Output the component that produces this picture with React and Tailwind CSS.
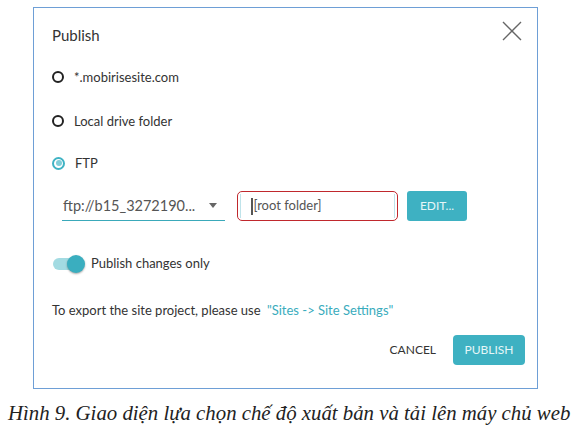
import React from "react";

function Radio({ checked }) {
  if (checked) {
    return (
      <span className="flex h-[13px] w-[13px] items-center justify-center rounded-full border-2 border-[#3fb3c4]">
        <span className="h-[6px] w-[6px] rounded-full bg-[#7fcdd8]" />
      </span>
    );
  }
  return <span className="h-[12px] w-[12px] rounded-full border-2 border-[#222]" />;
}

export default function App() {
  return (
    <div className="h-[433px] w-[575px] bg-white" style={{ fontFamily: "Lato, 'Open Sans', sans-serif" }}>
      <div className="ml-[33px] pt-[7px]">
        <div className="relative flex h-[382px] w-[505px] flex-col border-[1.5px] border-[#6e9fd6] bg-white pl-[18px] text-[#333]">
          <button className="absolute right-[15px] top-[13px] text-[#666]">
            <svg width="20" height="20" viewBox="0 0 20 20" fill="none" stroke="currentColor" strokeWidth="1.4">
              <path d="M1 1 L19 19 M19 1 L1 19" />
            </svg>
          </button>
          <div className="mt-[17px] text-[15px] leading-[20px] text-[#333]">Publish</div>
          <div className="mt-[23px] flex items-center gap-[10px] text-[13px] leading-[18px]">
            <Radio />
            <span>*.mobirisesite.com</span>
          </div>
          <div className="mt-[26px] flex items-center gap-[10px] text-[13px] leading-[18px]">
            <Radio />
            <span>Local drive folder</span>
          </div>
          <div className="mt-[24px] flex items-center gap-[10px] text-[13px] leading-[18px]">
            <Radio checked />
            <span>FTP</span>
          </div>
          <div className="mt-[19px] flex items-center">
            <div className="ml-[10px] flex h-[30px] w-[163px] items-center justify-between border-b-[1.5px] border-[#3aa9ba] pl-[1px] pr-[8px] text-[14.5px] text-[#555]">
              <span>ftp://b15_3272190...</span>
              <svg width="8" height="5" viewBox="0 0 10 6"><path d="M0 0 L10 0 L5 6 Z" fill="#666" /></svg>
            </div>
            <div className="ml-[12px] flex h-[30px] w-[161px] items-center rounded-[5px] border-[1.5px] border-[#c0282d] px-[2px]">
              <div className="flex h-[24px] w-full items-center border-x border-[#bfe3ea] pl-[10px] text-[13px] text-[#555]">
                <span className="mr-[1px] h-[17px] w-[1.5px] bg-[#555]" />
                <span>[root folder]</span>
              </div>
            </div>
            <button className="ml-[9px] flex h-[30px] w-[60px] items-center justify-center rounded-[3px] bg-[#3eb1c2] text-[12px] text-[#e6f6f8]">
              EDIT...
            </button>
          </div>
          <div className="mt-[33px] flex items-center">
            <div className="relative h-[20px] w-[34px]">
              <span className="absolute left-[1px] top-[4px] h-[12px] w-[28px] rounded-full bg-[#a3dbe2]" />
              <span className="absolute left-[15px] top-[1px] h-[18px] w-[18px] rounded-full bg-[#3aaebf] shadow-[0_1px_2px_rgba(0,0,0,0.35)]" />
            </div>
            <span className="ml-[5px] text-[13px] text-[#333]">Publish changes only</span>
          </div>
          <div className="mt-[27px] text-[13px] text-[#333]">
            To export the site project, please use <span className="ml-[3px] text-[#3aacbd]">"Sites -&gt; Site Settings"</span>
          </div>
          <div className="mt-[14px] flex items-center justify-end pr-[12px]">
            <span className="mr-[17px] text-[12px] text-[#333]">CANCEL</span>
            <button className="flex h-[30px] w-[72px] items-center justify-center rounded-[4px] bg-[#3eb1c2] text-[12px] text-[#e6f6f8]">
              PUBLISH
            </button>
          </div>
        </div>
      </div>
      <div
        className="mt-[12px] whitespace-nowrap pl-[8px] text-[20.8px] italic leading-[24px] text-[#222]"
        style={{ fontFamily: "'Liberation Serif', serif" }}
      >
        Hình 9. Giao diện lựa chọn chế độ xuất bản và tải lên máy chủ web
      </div>
    </div>
  );
}
